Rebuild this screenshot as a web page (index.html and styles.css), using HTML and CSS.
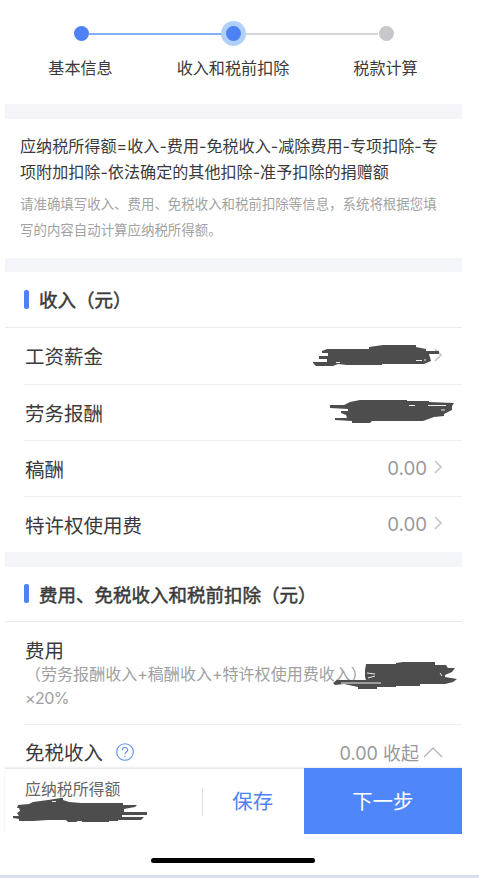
FILE: index.html
```html
<!DOCTYPE html>
<html lang="zh-CN">
<head>
    <meta charset="UTF-8">
    <meta name="viewport" content="width=device-width, initial-scale=1.0">
    <title>收入和税前扣除</title>
    <link rel="stylesheet" href="styles.css">
</head>
<body>

<div class="page">
    <div class="steps">
        <div class="step done">
            <span class="dot"></span>
            <span class="step-name">基本信息</span>
        </div>
        <div class="step-line active"></div>
        <div class="step current">
            <span class="dot"></span>
            <span class="step-name">收入和税前扣除</span>
        </div>
        <div class="step-line"></div>
        <div class="step">
            <span class="dot"></span>
            <span class="step-name">税款计算</span>
        </div>
    </div>

    <div class="formula">
        <p class="formula-text">应纳税所得额=收入-费用-免税收入-减除费用-专项扣除-专<br>项附加扣除-依法确定的其他扣除-准予扣除的捐赠额</p>
        <p class="formula-tip">请准确填写收入、费用、免税收入和税前扣除等信息，系统将根据您填<br>写的内容自动计算应纳税所得额。</p>
    </div>

    <div class="section income">
        <h3 class="section-title">收入（元）</h3>
        <div class="row">
            <span>工资薪金</span>
            <svg class="arrow" viewBox="0 0 8 14"><path d="M1 1l6 6-6 6"/></svg>
            <svg class="mask mask-salary" viewBox="0 0 126 22"><path d="M14 4H56V2L70 0H103V2L113 4V6H126V9H116L118 16L111 19H69V20H34L25 19L20 21H3L0 18V17H14V14H6V11H15V8H9V6Z"/><path class="gap" d="M23 17.5h4M103 15.5h6M111 15h2"/></svg>
        </div>
        <div class="row">
            <span>劳务报酬</span>
            <svg class="mask mask-labor" viewBox="0 0 124 23"><path d="M20 2L30 0H77V1H99V2L124 3L122 6V10L114 14V16L104 17L93 21H42L40 23H22V21L5 20V18H17L16 15L11 13V11H18V9L0 8V5H14Z"/><path class="gap" d="M79 5.5h6M98 5.5h18M111 10h4"/></svg>
        </div>
        <div class="row">
            <span>稿酬</span>
            <span class="value">0.00</span>
            <svg class="arrow" viewBox="0 0 8 14"><path d="M1 1l6 6-6 6"/></svg>
        </div>
        <div class="row">
            <span>特许权使用费</span>
            <span class="value">0.00</span>
            <svg class="arrow" viewBox="0 0 8 14"><path d="M1 1l6 6-6 6"/></svg>
        </div>
    </div>

    <div class="section deduct">
        <h3 class="section-title">费用、免税收入和税前扣除（元）</h3>
        <div class="row row-cost">
            <span>费用</span>
            <p class="row-desc">（劳务报酬收入+稿酬收入+特许权使用费收入）<br><span class="rate">×20%</span></p>
            <svg class="mask mask-cost" viewBox="0 0 124 27"><path d="M33 2H63V1L70 0H102V3H113L115 6H122L119 10L112 13V15L124 17L120 20L112 22H87V24H63V25H44V27H25V25L11 22L2 23L0 21L4 18H33L32 15V8L33 2Z"/><path class="gap" d="M8 21h40M35 16l7-2M34 11l8 1M107 11l2 3"/></svg>
        </div>
        <div class="row row-free">
            <span>免税收入</span>
            <svg class="help" viewBox="0 0 18 18"><circle cx="9" cy="9" r="8.3"/><path d="M6.4 7.2C6.4 3.6 11.7 3.8 11.7 7C11.7 9 9 9.1 9 11.3M9 12.8V14"/></svg>
            <span class="value">0.00 收起</span>
            <svg class="fold" viewBox="0 0 20 12"><path d="M1 11l9-9 9 9"/></svg>
        </div>
    </div>

    <div class="footer">
        <div class="total">
            <span>应纳税所得额</span>
            <svg class="mask mask-total" viewBox="0 0 134 25"><path d="M5 7L16 6L20 4L35 2L48 0H50V2L56 4L68 5H110V7H124L122 9L111 11V14H134V17H109V19H131L128 22H105V23H96V24H69V23H65L63 24H55L53 22H35L20 23H6V21L0 20V18H6L4 15L7 13L6 10H4Z"/><path class="gap" d="M39 3.5h4M110 18h19"/></svg>
        </div>
        <button class="btn save">保存</button>
        <button class="btn next">下一步</button>
    </div>
    <div class="home-bar"></div>
</div>
<div class="bottom-edge"></div>

</body>
</html>
```
FILE: styles.css
```css
* { box-sizing: border-box; }
body { margin: 0; height: 878px; overflow: hidden; background: #fff; color: #3a3a3a; font-family: Inter, "Noto Sans CJK SC", sans-serif; display: flex; flex-direction: column; }
p, h3 { margin: 0; }
svg { fill: none; flex: none; }

.page { width: 457px; height: 875px; margin-left: 5px; }

/* 步骤条 */
.steps { height: 104px; padding: 21px 68px 0; display: flex; align-items: flex-start; }
.step { width: 16px; display: flex; flex-direction: column; align-items: center; flex: none; }
.step .dot { width: 15px; height: 15px; margin: 5px 0; border-radius: 50%; background: #c7c7cc; flex: none; }
.step.done .dot { background: #4c82f4; }
.step.current { width: 24px; }
.step.current .dot { width: 25px; height: 25px; margin: 0; border: 5px solid #b0d0fb; background: #4c82f4; }
.step-name { margin: 10px 1px 0 0; font-size: 16.1px; line-height: 24px; white-space: nowrap; }
.step-line { flex: 1; height: 2px; margin-top: 12px; background: #d5d5d9; }
.step-line.active { background: #83aef3; }

.formula { height: 168px; padding: 14px 15px 0; border-top: 15px solid #f4f4f9; border-bottom: 14px solid #f4f5f9; white-space: nowrap; }
.formula-text { font-size: 16.1px; line-height: 26px; }
.formula-tip { margin-top: 6px; font-size: 13.45px; line-height: 26px; color: #a2a2a2; }

.section-title { height: 56px; padding: 0 0 1px 19px; border-bottom: 1px solid #ebebed; display: flex; align-items: center; font-family: "Noto Sans CJK SC", sans-serif; font-size: 18.5px; font-weight: 400; -webkit-text-stroke: 0.5px #3a3a3a; line-height: 26px; white-space: nowrap; }
.section-title::before { content: ""; width: 5px; height: 19px; margin-right: 10px; border-radius: 2px; background: #4c82f4; }
.row { position: relative; height: 56px; margin-left: 19px; padding: 0 20px 1px 1px; border-bottom: 1px solid #efeff1; display: flex; align-items: center; font-size: 19.5px; white-space: nowrap; }
.row:last-child { border-bottom: none; }
.income .row:nth-child(2) { height: 57px; }
.income .row:last-child { height: 55px; }
.value { margin-left: auto; color: #999; font-size: 18.7px; }
.arrow { width: 8px; height: 14px; margin: 0 0 2px 7px; stroke: #c8c8cc; stroke-width: 1.7; }
.row > span:first-child + .arrow { margin-left: auto; }
.deduct { border-top: 15px solid #f4f5f9; }
.deduct .section-title { height: 55px; }
.row-cost { height: 103px; padding-top: 15px; flex-direction: column; align-items: flex-start; justify-content: flex-start; line-height: 28px; }
.row-desc { margin-top: -3px; font-size: 16.05px; line-height: 24px; color: #a0a0a0; }
.rate { letter-spacing: -0.6px; }
.row-free { height: 43px; padding-top: 11px; }
.row-free .value { font-size: 18px; }
.help { width: 18px; height: 18px; margin-left: 13px; stroke: #5b8ff0; stroke-width: 1.1; }
.fold { width: 20px; height: 12px; margin: 0 -1px 0 4px; stroke: #b5b5b5; stroke-width: 1.4; }

/* 涂抹遮挡 */
.mask { position: absolute; fill: #4d4d4d; }
.mask .gap { fill: none; stroke: #eee; stroke-width: 1; }
.mask-salary { left: 289px; top: 17px; width: 126px; height: 22px; }
.mask-labor { left: 306px; top: 15px; width: 124px; height: 23px; }
.mask-cost { left: 309px; top: 40px; width: 124px; height: 27px; }
.mask-total { left: 8px; top: 29px; width: 134px; height: 25px; }

.footer { position: relative; height: 66px; border-top: 1px solid #e9e9e9; box-shadow: 0 -1px 2px rgba(0, 0, 0, 0.08); background: #fff; display: flex; align-items: stretch; }
.total { width: 197px; padding: 9px 0 0 20px; font-size: 15.9px; line-height: 24px; color: #666; }
.btn { padding: 0 0 3px; border: none; background: none; font-family: inherit; font-size: 20.4px; }
.save { width: 101.5px; color: #4c82f4; position: relative; }
.save::before { content: ""; position: absolute; left: 0; top: 19px; width: 1px; height: 28px; background: #dedede; }
.next { flex: 1; margin-top: -1px; background: #4f86f9; color: #fff; }
.home-bar { width: 164px; height: 5px; margin: 24px 0 0 146px; border-radius: 3px; background: #000; }
.bottom-edge { height: 3px; background: #d9dff0; }
```
